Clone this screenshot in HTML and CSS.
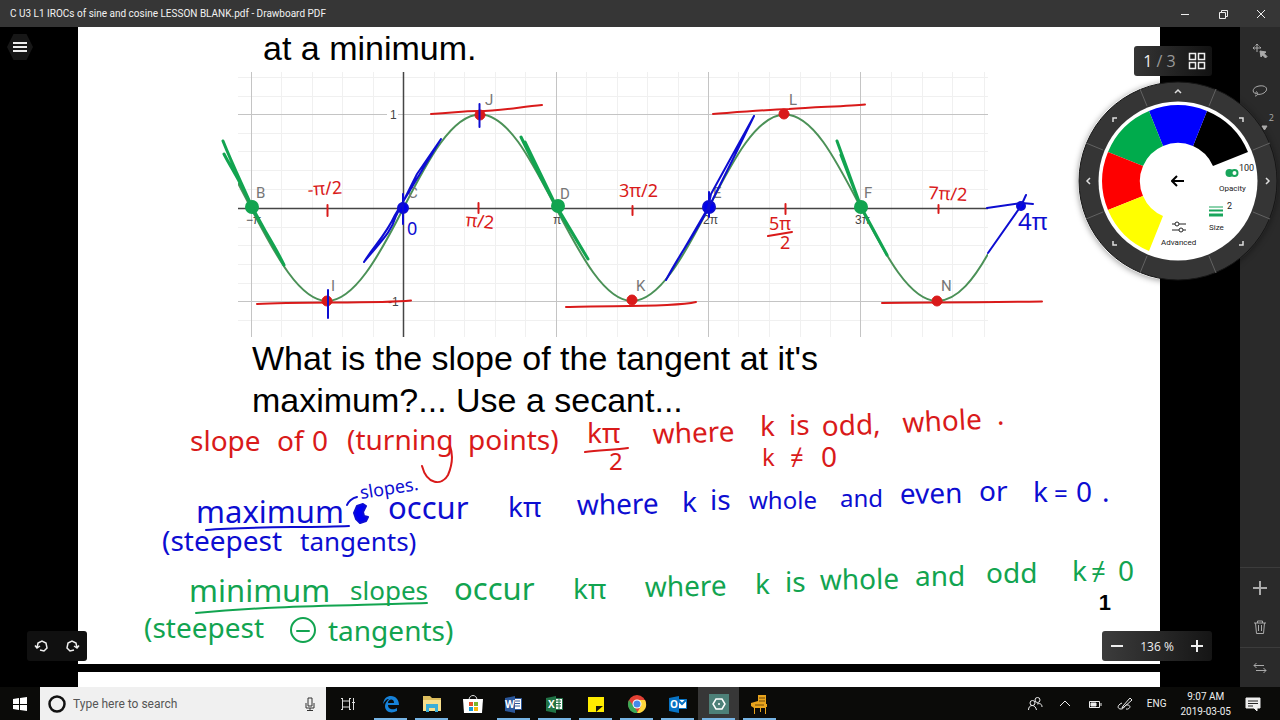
FILE: index.html
```html
<!DOCTYPE html>
<html lang="en">
<head>
<meta charset="utf-8">
<title>C U3 L1 IROCs of sine and cosine LESSON BLANK.pdf - Drawboard PDF</title>
<link rel="stylesheet" href="styles.css">
</head>
<body>
<header class="titlebar">
  <h1 class="title">C U3 L1 IROCs of sine and cosine LESSON BLANK.pdf - Drawboard PDF</h1>
  <button class="win-btn" aria-label="Minimize"><svg width="12" height="12"><path d="M2 6.500h8"/></svg></button>
  <button class="win-btn" aria-label="Restore"><svg width="12" height="12"><path d="M2.500 4.500h6v6h-6zM4.500 4.500v-2h6v6h-2"/></svg></button>
  <button class="win-btn" aria-label="Close"><svg width="12" height="12"><path d="M2 2l8 8M10 2l-8 8"/></svg></button>
</header>

<div class="workspace">
  <div class="gutter-left">
    <button class="menu-btn" aria-label="Menu"><svg width="28" height="28"><path class="hex" d="M7.500 1h13L27 14l-6.500 13h-13L1 14z"/><path class="bars" d="M7 10h14M7 14h14M7 18h14"/></svg></button>
  </div>

  <main class="document">
    <section class="sheet">
      <p class="print indent">at a minimum.</p>
      <svg class="graph" width="750" height="265" viewBox="238 72 750 265" role="img" aria-label="Sine curve">
        <path class="minor" d="M281.500 72v265M312.500 72v265M342.500 72v265M373.500 72v265M434.500 72v265M464.500 72v265M495.500 72v265M525.500 72v265M586.500 72v265M617.500 72v265M647.500 72v265M678.500 72v265M738.500 72v265M769.500 72v265M800.500 72v265M830.500 72v265M891.500 72v265M922.500 72v265M952.500 72v265M984.500 72v265M238 77.500h750M238 96.500h750M238 133.500h750M238 151.500h750M238 170.500h750M238 189.500h750M238 227.500h750M238 245.500h750M238 264.500h750M238 283.500h750M238 320.500h750"/>
        <path class="major" d="M251.500 72v265M556.500 72v265M708.500 72v265M860.500 72v265M238 114.500h149M398 114.500h590M238 301.500h149M399 301.500h589"/>
        <path class="axis" d="M238 208.500h750M403.500 72v265"/>
        <g class="tick"><text x="390" y="119">1</text><text x="388" y="306">-1</text><text x="246" y="224">−π</text><text x="553" y="224">π</text><text x="703" y="224">2π</text><text x="855" y="224">3π</text></g>
        <path class="curve" d="M238 183L251 208C276 256 300 301 327 301S379 256 403.500 208S452 114.500 480 114.500S531 160 556 208S605 301 632 301S684 256 708.500 208S757 114.500 785 114.500S836 160 861 208S910 301 937 301C958 301 975 277 988 254"/>
        <g class="label"><text x="256" y="198">B</text><text x="331" y="291">I</text><text x="408" y="198">C</text><text x="485" y="105">J</text><text x="560" y="199">D</text><text x="636" y="291">K</text><text x="713" y="198">E</text><text x="789" y="105">L</text><text x="864" y="198">F</text><text x="941" y="291">N</text></g>
      </svg>
      <p class="print">What is the slope of the tangent at it's<br>maximum?... Use a secant...</p>
      <span class="page-number">1</span>

      <svg class="ink" aria-label="Annotations"><g transform="translate(-78 -27)">
        <g class="red">
          <g class="dots"><circle cx="327" cy="301" r="5"/><circle cx="480" cy="115" r="5"/><circle cx="632" cy="300" r="5"/><circle cx="784" cy="114" r="5"/><circle cx="937" cy="301" r="5"/></g>
          <path d="M257 304C300 301 375 304 411 300.500M431 114C454 113 461 111 478 111C501 111 519 107 542 105M566 307C602 305 670 308 696 302M713 114C740 112 764 110 789 109C820 107 850 106 865 104.500M882 303C923 302 944 303 1042 301.500M327.500 205v11M478.500 203v10M632.500 206v9M785.500 204v10M938.500 205v8M768 236l24-4M585 452C600 450 616 450 628 448M422 466C427 485 442 486 448 475C453 463 453 454 450 446"/>
          <g class="small"><text x="308" y="196" transform="rotate(-4 308 196)">-π/2</text><text x="465" y="226" transform="rotate(6 465 226)">π/2</text><text x="619" y="197">3π/2</text><text x="769" y="230">5π</text><text x="780" y="249">2</text><text x="928" y="199" transform="rotate(3 928 199)">7π/2</text></g>
          <text x="190" y="451">slope</text><text x="277" y="451">of</text><text x="312" y="451">0</text><text x="347" y="450">(turning</text><text x="468" y="450">points)</text><text x="587" y="443">kπ</text><text x="609" y="470" class="mid">2</text><text x="653" y="444" transform="rotate(-2 653 444)">where</text><text x="760" y="436">k</text><text x="789" y="435">is</text><text x="822" y="436" transform="rotate(-2 822 436)">odd,</text><text x="903" y="433" transform="rotate(-3 903 433)">whole</text><text x="997" y="425">.</text>
          <text x="762" y="466" class="mid">k</text><text x="790" y="466" class="mid">≠</text><text x="821" y="467">0</text>
        </g>
        <g class="blue">
          <g class="dots"><circle cx="403" cy="208" r="5"/><circle cx="709" cy="207" r="6"/><circle cx="1021" cy="206" r="4"/></g>
          <path d="M479.500 104v23M328 290v28M403 194v30M709 192v25M364 262C373 247 386 235 395 215L441 139L417 174L396 216C391 233 380 242 364 262M666 280L708 208L711 194L754 116L735 155L709 207C692 240 681 251 666 280M988 253L1021 206L1026 195M987 208L1022 203L1033 204M206 530C247 526 308 528 349 526M347 505C348 502 352 498 357 497"/>
          <path class="blob" d="M357 506l6-2l3 2l-3 6l1 4l4 1l-2 4l-6 2l-4-4l-2-6z"/>
          <text x="407" y="235" class="small">0</text><text x="1018" y="230" class="mid">4π</text>
          <text x="196" y="523" class="wide">maximum</text><text x="361" y="499" class="small" transform="rotate(-9 361 499)">slopes.</text><text x="388" y="519" class="wide">occur</text><text x="508" y="517">kπ</text><text x="577" y="515" transform="rotate(-1 577 515)">where</text><text x="682" y="512">k</text><text x="710" y="510">is</text><text x="749" y="509" class="mid">whole</text><text x="840" y="507" class="mid">and</text><text x="900" y="504" transform="rotate(-1 900 504)">even</text><text x="979" y="501">or</text><text x="1033" y="502">k</text><text x="1054" y="502" class="mid">=</text><text x="1076" y="502">0</text><text x="1102" y="502">.</text>
          <text x="162" y="551">(steepest</text><text x="300" y="551" class="mid-wide">tangents)</text>
        </g>
        <g class="green">
          <g class="dots"><circle cx="252" cy="207" r="6"/><circle cx="558" cy="206" r="6"/><circle cx="861" cy="207" r="6"/></g>
          <path class="thick" d="M223 141C233 166 243 186 252 207L284 265C275 246 264 230 252 208C242 183 231 168 224 154M521 137C532 160 544 185 557 207L588 259L557 208L525 142M837 141L861 207L887 255L861 207L841 155"/>
          <path d="M196 613C270 606 330 606 427 603M297 631h12"/><circle cx="303" cy="630" r="12"/>
          <text x="189" y="602" class="wide">minimum</text><text x="350" y="600" class="mid-wide">slopes</text><text x="454" y="600" class="wide">occur</text><text x="573" y="599">kπ</text><text x="645" y="597" transform="rotate(-1 645 597)">where</text><text x="755" y="594">k</text><text x="785" y="592">is</text><text x="820" y="590" transform="rotate(-1 820 590)">whole</text><text x="915" y="586">and</text><text x="986" y="583">odd</text><text x="1072" y="581">k</text><text x="1091" y="581" class="mid-wide">≠</text><text x="1118" y="581">0</text>
          <text x="144" y="638">(steepest</text><text x="328" y="641">tangents)</text>
        </g>
      </g></svg>
    </section>
    <section class="sheet next"></section>
  </main>

  <div class="gutter-right"></div>

  <aside class="tools">
    <div class="tool-group">
      <button class="tool" aria-label="Select"><svg width="18" height="18"><path d="M6 2v8M2 6h8M4.500 3.500L6 2l1.500 1.500M3.500 4.500L2 6l1.500 1.500M8.500 4.500L10 6"/><path class="solid" d="M9 9l6 1-2 1.500 3 3-1.500 1.500-3-3-1.500 2z"/></svg></button>
      <button class="tool" aria-label="Lasso"><svg width="18" height="18"><path d="M5 12C0 10 2 5 8 4s9 2 7 5-7 4-9 3-1-3 0-2 1 4-2 4"/></svg></button>
      <button class="tool pen" aria-label="Pen"><svg width="18" height="18"><path class="solid" d="M11 4h5l-2.500 4z"/></svg><span>2</span></button>
    </div>
    <div class="tool-group">
      <button class="tool divided" aria-label="Add"><svg width="18" height="18"><path class="heavy" d="M9 2v14M2 9h14"/></svg></button>
      <button class="tool" aria-label="Delete"><svg width="18" height="18"><path d="M3 5h12M6.500 5V3h5v2M4.500 5l1 10.500h7l1-10.500M7.500 7v6M10.500 7v6"/></svg></button>
      <button class="tool divided" aria-label="Swap"><svg width="18" height="18"><path d="M13 6.500H3l2.500-2.500M3 6.500L5.500 9M5 11.500h10L12.500 9M15 11.500L12.500 14"/></svg></button>
    </div>
  </aside>

  <div class="panel history">
    <button aria-label="Undo"><svg width="16" height="16"><path d="M6 12l4 1 3-3-1-5-4-2-4 2-1 5M1 7.500l2 2.500 3-2"/></svg></button>
    <button aria-label="Redo"><svg width="16" height="16"><path d="M10 12l-4 1-3-3 1-5 4-2 4 2 1 5M15 7.500L13 10l-3-2"/></svg></button>
  </div>
  <div class="panel pages">
    <span class="page-count">1<i> / 3</i></span>
    <button aria-label="Thumbnails"><svg width="18" height="18"><path d="M1.500 1.500h6v6h-6zM10.500 1.500h6v6h-6zM1.500 10.500h6v6h-6zM10.500 10.500h6v6h-6z"/></svg></button>
  </div>
  <div class="panel zoom">
    <button aria-label="Zoom out"><svg width="14" height="14"><path d="M1 7h12"/></svg></button>
    <span>136 %</span>
    <button aria-label="Zoom in"><svg width="14" height="14"><path d="M1 7h12M7 1v12"/></svg></button>
  </div>

  <div class="wheel">
    <svg class="dial" width="200" height="200" viewBox="-100 -100 200 200">
      <circle r="99" fill="#353535" stroke="#161616"/>
      <path stroke="#626262" d="M75 31L92 38M31 75L38 92M-31 75L-38 92M-75 31L-92 38M75-31L92-38M31-75L38-92M-31-75L-38-92M-75-31L-92-38"/>
      <circle r="79.500" fill="#fff"/>
      <path fill="#000" d="M70-29A76 76 0 0 0 29-70L15-35A38 38 0 0 1 35-15z"/>
      <path fill="#0000fe" d="M29-70A76 76 0 0 0-29-70L-15-35A38 38 0 0 1 15-35z"/>
      <path fill="#00ab4c" d="M-29-70A76 76 0 0 0-70-29L-35-15A38 38 0 0 1-15-35z"/>
      <path fill="#fe0000" d="M-70-29A76 76 0 0 0-70 29L-35 15A38 38 0 0 1-35-15z"/>
      <path fill="#ff0" d="M-70 29A76 76 0 0 0-29 70L-15 35A38 38 0 0 1-35 15z"/>
      <path class="nav" d="M-3-88l3-3 3 3M-88-3l-3 3 3 3M88-3l3 3-3 3M-65-59v-4h4M61-63h4v4M-65 60v4h4M61 64h4v-4"/>
    </svg>
    <button class="back" aria-label="Back"><svg width="14" height="12"><path d="M13 6H1M6 1L1 6l5 5"/></svg></button>
    <button class="opacity"><svg width="14" height="8"><circle cx="4.500" cy="4" r="4" fill="#18a55b"/><circle cx="9.500" cy="4" r="3" fill="#fff" stroke="#18a55b" stroke-width="2"/></svg><b>100</b><span>Opacity</span></button>
    <button class="size"><svg width="14" height="11"><path stroke="#18a55b" stroke-width="1" d="M0 1h14"/><path stroke="#18a55b" stroke-width="2" d="M0 4.500h14"/><path stroke="#18a55b" stroke-width="3" d="M0 9h14"/></svg><b>2</b><span>Size</span></button>
    <button class="advanced"><svg width="14" height="12"><path stroke="#222" fill="none" d="M0 3h3M7 3h7M0 9h7M11 9h3"/><circle cx="5" cy="3" r="2" fill="none" stroke="#222"/><circle cx="9" cy="9" r="2" fill="none" stroke="#222"/></svg><span>Advanced</span></button>
  </div>
</div>

<footer class="taskbar">
  <button class="start" aria-label="Start"><svg width="16" height="16"><path fill="#fff" d="M1 3l6-1v6H1zM8 2l7-1v7H8zM1 9h6v5l-6-1zM8 9h7v6l-7-1z"/></svg></button>
  <label class="search">
    <svg width="18" height="18"><circle cx="9" cy="9" r="7.500" fill="none" stroke="#111" stroke-width="2.500"/></svg>
    <input type="text" placeholder="Type here to search" aria-label="Search">
    <svg width="12" height="16"><path fill="none" stroke="#333" d="M4 2h4v8H4zM2 7v5h8V7M6 12v2M3 14.500h6"/></svg>
  </label>
  <button class="task-view" aria-label="Task view"><svg width="16" height="16"><path fill="none" stroke="#ddd" d="M2.500 5h7v6h-7zM1 2.500h2M9 2.500h2M1 13.500h2M9 13.500h2M2.500 2v3M9.500 2v3M2.500 11v3M9.500 11v3M13.500 2v12M12 6.500h3"/></svg></button>
  <nav class="apps">
    <button class="app open" aria-label="Edge"><svg width="20" height="20"><path fill="#1682d9" d="M2 10C3 4 6 2 10 2c5 0 8 4 8 9H7c0 5 6 5 9 3v3c-6 3-12 1-12-5 0-3 2-5 4-7-3 0-4 2-6 5zM7 9h6c0-5-6-4-6 0z"/></svg></button>
    <button class="app open" aria-label="File Explorer"><svg width="20" height="20"><path fill="#dcbd5d" d="M1 2h7l2 2h9v13H1z"/><path fill="#f7df8d" d="M1 6h18v11H1z"/><path fill="#3aaed8" d="M4 10h12v8h-3v-4H7v4H4z"/></svg></button>
    <button class="app" aria-label="Store"><svg width="20" height="20"><path fill="none" stroke="#ddd" d="M6 6c0-6 8-6 8 0"/><path fill="#fff" d="M0 5h20l-1 14H1z"/><path fill="#e6502a" d="M6 8h4v4H6z"/><path fill="#7bb62c" d="M11 8h4v4h-4z"/><path fill="#169bd7" d="M6 13h4v4H6z"/><path fill="#f6b80c" d="M11 13h4v4h-4z"/></svg></button>
    <button class="app open" aria-label="Word"><svg width="20" height="20"><path fill="#fff" stroke="#2b579a" d="M9.500 4.500h8v11h-8z"/><path stroke="#2b579a" d="M11 7h5M11 9.500h5M11 12h5"/><path fill="#2b579a" d="M1 4l10-2v17L1 17z"/><text x="1" y="14">W</text></svg></button>
    <button class="app open" aria-label="Excel"><svg width="20" height="20"><path fill="#fff" stroke="#217346" d="M9.500 4.500h8v11h-8z"/><path stroke="#217346" d="M11 7h5M11 9.500h5M11 12h5M14 5v10"/><path fill="#217346" d="M1 4l10-2v17L1 17z"/><text x="3" y="14">X</text></svg></button>
    <button class="app open" aria-label="Sticky Notes"><svg width="20" height="20"><path fill="#ffec00" d="M2 3h16v15H2z"/><path fill="#17160c" d="M10 12h7l-7 6z"/></svg></button>
    <button class="app open" aria-label="Chrome"><svg width="20" height="20"><circle cx="10" cy="10" r="9" fill="#e44134"/><path fill="#39a955" d="M2 6l6 8 3 5C3 20-1 12 2 6z"/><path fill="#fed63c" d="M10 6h8c4 8-3 14-8 13l4-7z"/><circle cx="10" cy="10" r="4.500" fill="#fff"/><circle cx="10" cy="10" r="3.500" fill="#4689e8"/></svg></button>
    <button class="app open" aria-label="Outlook"><svg width="20" height="20"><path fill="#fff" stroke="#0873c4" d="M9.500 5.500h9v9h-9z"/><path fill="none" stroke="#0873c4" stroke-width="2" d="M10 6l4 4 4-4"/><path fill="#0873c4" d="M1 4l10-2v17L1 17z"/><text x="2" y="14">O</text></svg></button>
    <button class="app open active" aria-label="Drawboard PDF"><svg width="20" height="20"><path fill="#4d8078" d="M0 0h20v20H0z"/><path fill="none" stroke="#fff" stroke-width="1.500" d="M7 5h6l3 5-3 5H7l-3-5z"/><circle cx="10" cy="10" r="1" fill="#fff"/></svg></button>
    <button class="app open" aria-label="Chair"><svg width="20" height="20"><path fill="#e9a41d" d="M8 1h8v9h1v3h-1v7h-1v-6h-4v4h-1v-4H5v6H4v-6L1 12V9l7-2z"/><path stroke="#6c480a" d="M9 4h6M9 7h6M5 11h9"/></svg></button>
  </nav>
  <div class="tray">
    <button aria-label="People"><svg width="16" height="16"><circle cx="5.500" cy="7" r="2.500"/><path d="M1.500 14c0-6 7-6 8 0"/><circle cx="10.500" cy="4" r="2.500"/><path d="M10 8c3-1 5 0 5 3"/></svg></button>
    <button aria-label="Hidden icons"><svg width="16" height="16"><path d="M3 10l5-5 5 5"/></svg></button>
    <button aria-label="Battery"><svg width="16" height="16"><path d="M2.500 5.500h10v6h-10z"/><path d="M14 7v3"/><path fill="#eee" d="M4 7h5v3H4z"/></svg></button>
    <button aria-label="Pen workspace"><svg width="16" height="16"><path d="M6 10l7-8 2 2-8 7-2 1zM5 7c-5 2-5 6-1 6s3-5 7-4 1 5-2 4"/></svg></button>
    <button>ENG</button>
    <button class="clock"><time>9:07 AM</time><time>2019-03-05</time></button>
    <button aria-label="Notifications"><svg width="16" height="16"><path fill="#eee" d="M1 2h14v10h-3v3l-3-3H1z"/><path stroke="#222" d="M3 5h10M3 7.500h10M3 10h5"/></svg></button>
  </div>
</footer>
</body>
</html>
```
FILE: styles.css
```css
* { box-sizing: border-box; }
body {
  margin: 0;
  height: 100vh;
  display: flex;
  flex-direction: column;
  overflow: hidden;
  background: #000;
  font-family: "Open Sans", "Noto Sans", sans-serif;
}
button {
  border: 0;
  padding: 0;
  background: none;
  color: inherit;
  font: inherit;
  display: flex;
  align-items: center;
  justify-content: center;
}
p { margin: 0; }

.titlebar {
  display: flex;
  align-items: center;
  height: 27px;
  padding-left: 10px;
  background: #363636;
  color: #f2f2f2;
}
.title { flex: 1; margin: 0; font: 10px/16px Roboto, sans-serif; }
.win-btn { width: 38px; height: 27px; }
.win-btn svg { fill: none; stroke: #eee; }

.workspace { flex: 1; min-height: 0; display: flex; position: relative; }
.gutter-left { width: 78px; padding: 6px; }
.gutter-right { width: 80px; }
.menu-btn .hex { fill: #171717; }
.menu-btn .bars { stroke: #eee; stroke-width: 2; }

.document { flex: 1; min-width: 0; display: flex; flex-direction: column; gap: 8px; overflow: hidden; }
.sheet { position: relative; flex: none; height: 637px; background: #fff; padding-left: 174px; }
.sheet.next { height: 80px; }
.print { font: 34px/42px "Liberation Sans", Arial, sans-serif; color: #000; white-space: nowrap; }
.print.indent { padding-left: 11px; height: 45px; }
.graph { display: block; margin-left: -14px; }
.graph path { fill: none; }
.graph .minor { stroke: #f0f0f0; }
.graph .major { stroke: #c4c4c4; }
.graph .axis { stroke: #454545; stroke-width: 1.5; }
.graph .curve { stroke: #4b9157; stroke-width: 2; }
.graph .tick { font: 12px "Liberation Sans", sans-serif; fill: #444; }
.graph .label { font: 15px Roboto, sans-serif; fill: #777; }
.page-number { position: absolute; right: 49px; bottom: 48px; font: bold 22px/26px "Liberation Sans", sans-serif; }

.ink { position: absolute; inset: 0; width: 100%; height: 100%; font: 28px "Noto Sans", sans-serif; }
.ink path, .ink circle { fill: none; stroke-width: 2; stroke-linecap: round; stroke-linejoin: round; }
.ink .thick { stroke-width: 3; }
.ink .small { font-size: 18px; }
.ink .mid { font-size: 24px; }
.ink .mid-wide { font-size: 26px; }
.ink .wide { font-size: 31px; }
.ink .red { fill: #d91a1a; stroke: #d91a1a; }
.ink .blue { fill: #0d0dd1; stroke: #0d0dd1; }
.ink .green { fill: #12a450; stroke: #12a450; }
.ink text { stroke: none; }
.ink .red .dots circle { fill: #d91a1a; stroke-width: 1; }
.ink .blue .dots circle, .ink .blue .blob { fill: #0000f0; }
.ink .green .dots circle { fill: #12a450; }

.tools { width: 40px; display: flex; flex-direction: column; justify-content: space-between; background: #2a2a2a; color: #aaa; padding-top: 4px; }
.tool { width: 40px; height: 40px; position: relative; }
.tool svg { fill: none; stroke: #aaa; }
.tool .solid { fill: #aaa; }
.tool .heavy { stroke-width: 2; }
.tool.divided { border-top: 1px solid #3c3c3c; }
.tool.pen { z-index: 1; }
.tool.pen span { position: absolute; right: 6px; top: 0; font-size: 9px; }

.panel { position: absolute; display: flex; align-items: center; justify-content: space-around; height: 30px; border-radius: 3px; background: #202020; color: #eee; }
.panel svg { fill: none; stroke: #eee; stroke-width: 1.5; }
.history { left: 27px; bottom: 26px; width: 60px; background: #101010; }
.pages { right: 68px; top: 19px; width: 78px; padding-left: 3px; background: linear-gradient(90deg, #353535, #121212); }
.page-count { font-size: 16px; }
.page-count i { font-style: normal; color: #999; }
.zoom { right: 68px; bottom: 26px; width: 110px; background: linear-gradient(90deg, #3c3c3c, #151515); font-size: 12px; }
.zoom svg { stroke-width: 2; }

.wheel { position: absolute; right: 2px; top: 54px; width: 200px; height: 200px; border-radius: 50%; box-shadow: 0 1px 6px #0006; }
.dial { display: block; }
.dial .nav { fill: none; stroke: #ddd; stroke-width: 1.5; }
.wheel button { position: absolute; color: #222; font: 8px/12px Roboto, sans-serif; flex-direction: column; gap: 4px; }
.wheel b { position: absolute; font-size: 9px; font-weight: 400; }
.wheel .back { left: 93px; top: 94px; }
.back svg { fill: none; stroke: #000; stroke-width: 2; }
.wheel .opacity { left: 141px; top: 88px; gap: 6px; }
.wheel .opacity b { left: 20px; top: -7px; }
.wheel .size { left: 131px; top: 125px; gap: 5px; }
.wheel .size b { left: 18px; top: -6px; }
.wheel .advanced { left: 83px; top: 140px; }

.taskbar { display: flex; height: 33px; background: #0b0b09; color: #eee; }
.start { width: 40px; }
.search { display: flex; align-items: center; gap: 7px; width: 286px; padding: 0 10px 0 8px; background: #f0f0f0; }
.search input { flex: 1; min-width: 0; border: 0; padding: 0; background: none; outline: 0; font: 12px/16px Roboto, sans-serif; color: #333; }
.search input::placeholder { color: #555; opacity: 1; }
.task-view { width: 43px; }
.apps { display: flex; flex: 1; padding-left: 1px; }
.app { width: 41px; position: relative; }
.app.open::after { content: ""; position: absolute; left: 4px; right: 4px; bottom: 0; height: 2px; background: #76b4e4; }
.app.active { background: #373737; }
.app text { font: bold 10px "Open Sans", sans-serif; fill: #fff; }
.tray { display: flex; align-items: center; gap: 14px; padding-right: 19px; font: 10px/15px Roboto, sans-serif; }
.tray svg { fill: none; stroke: #eee; display: block; }
.clock { flex-direction: column; }
```
